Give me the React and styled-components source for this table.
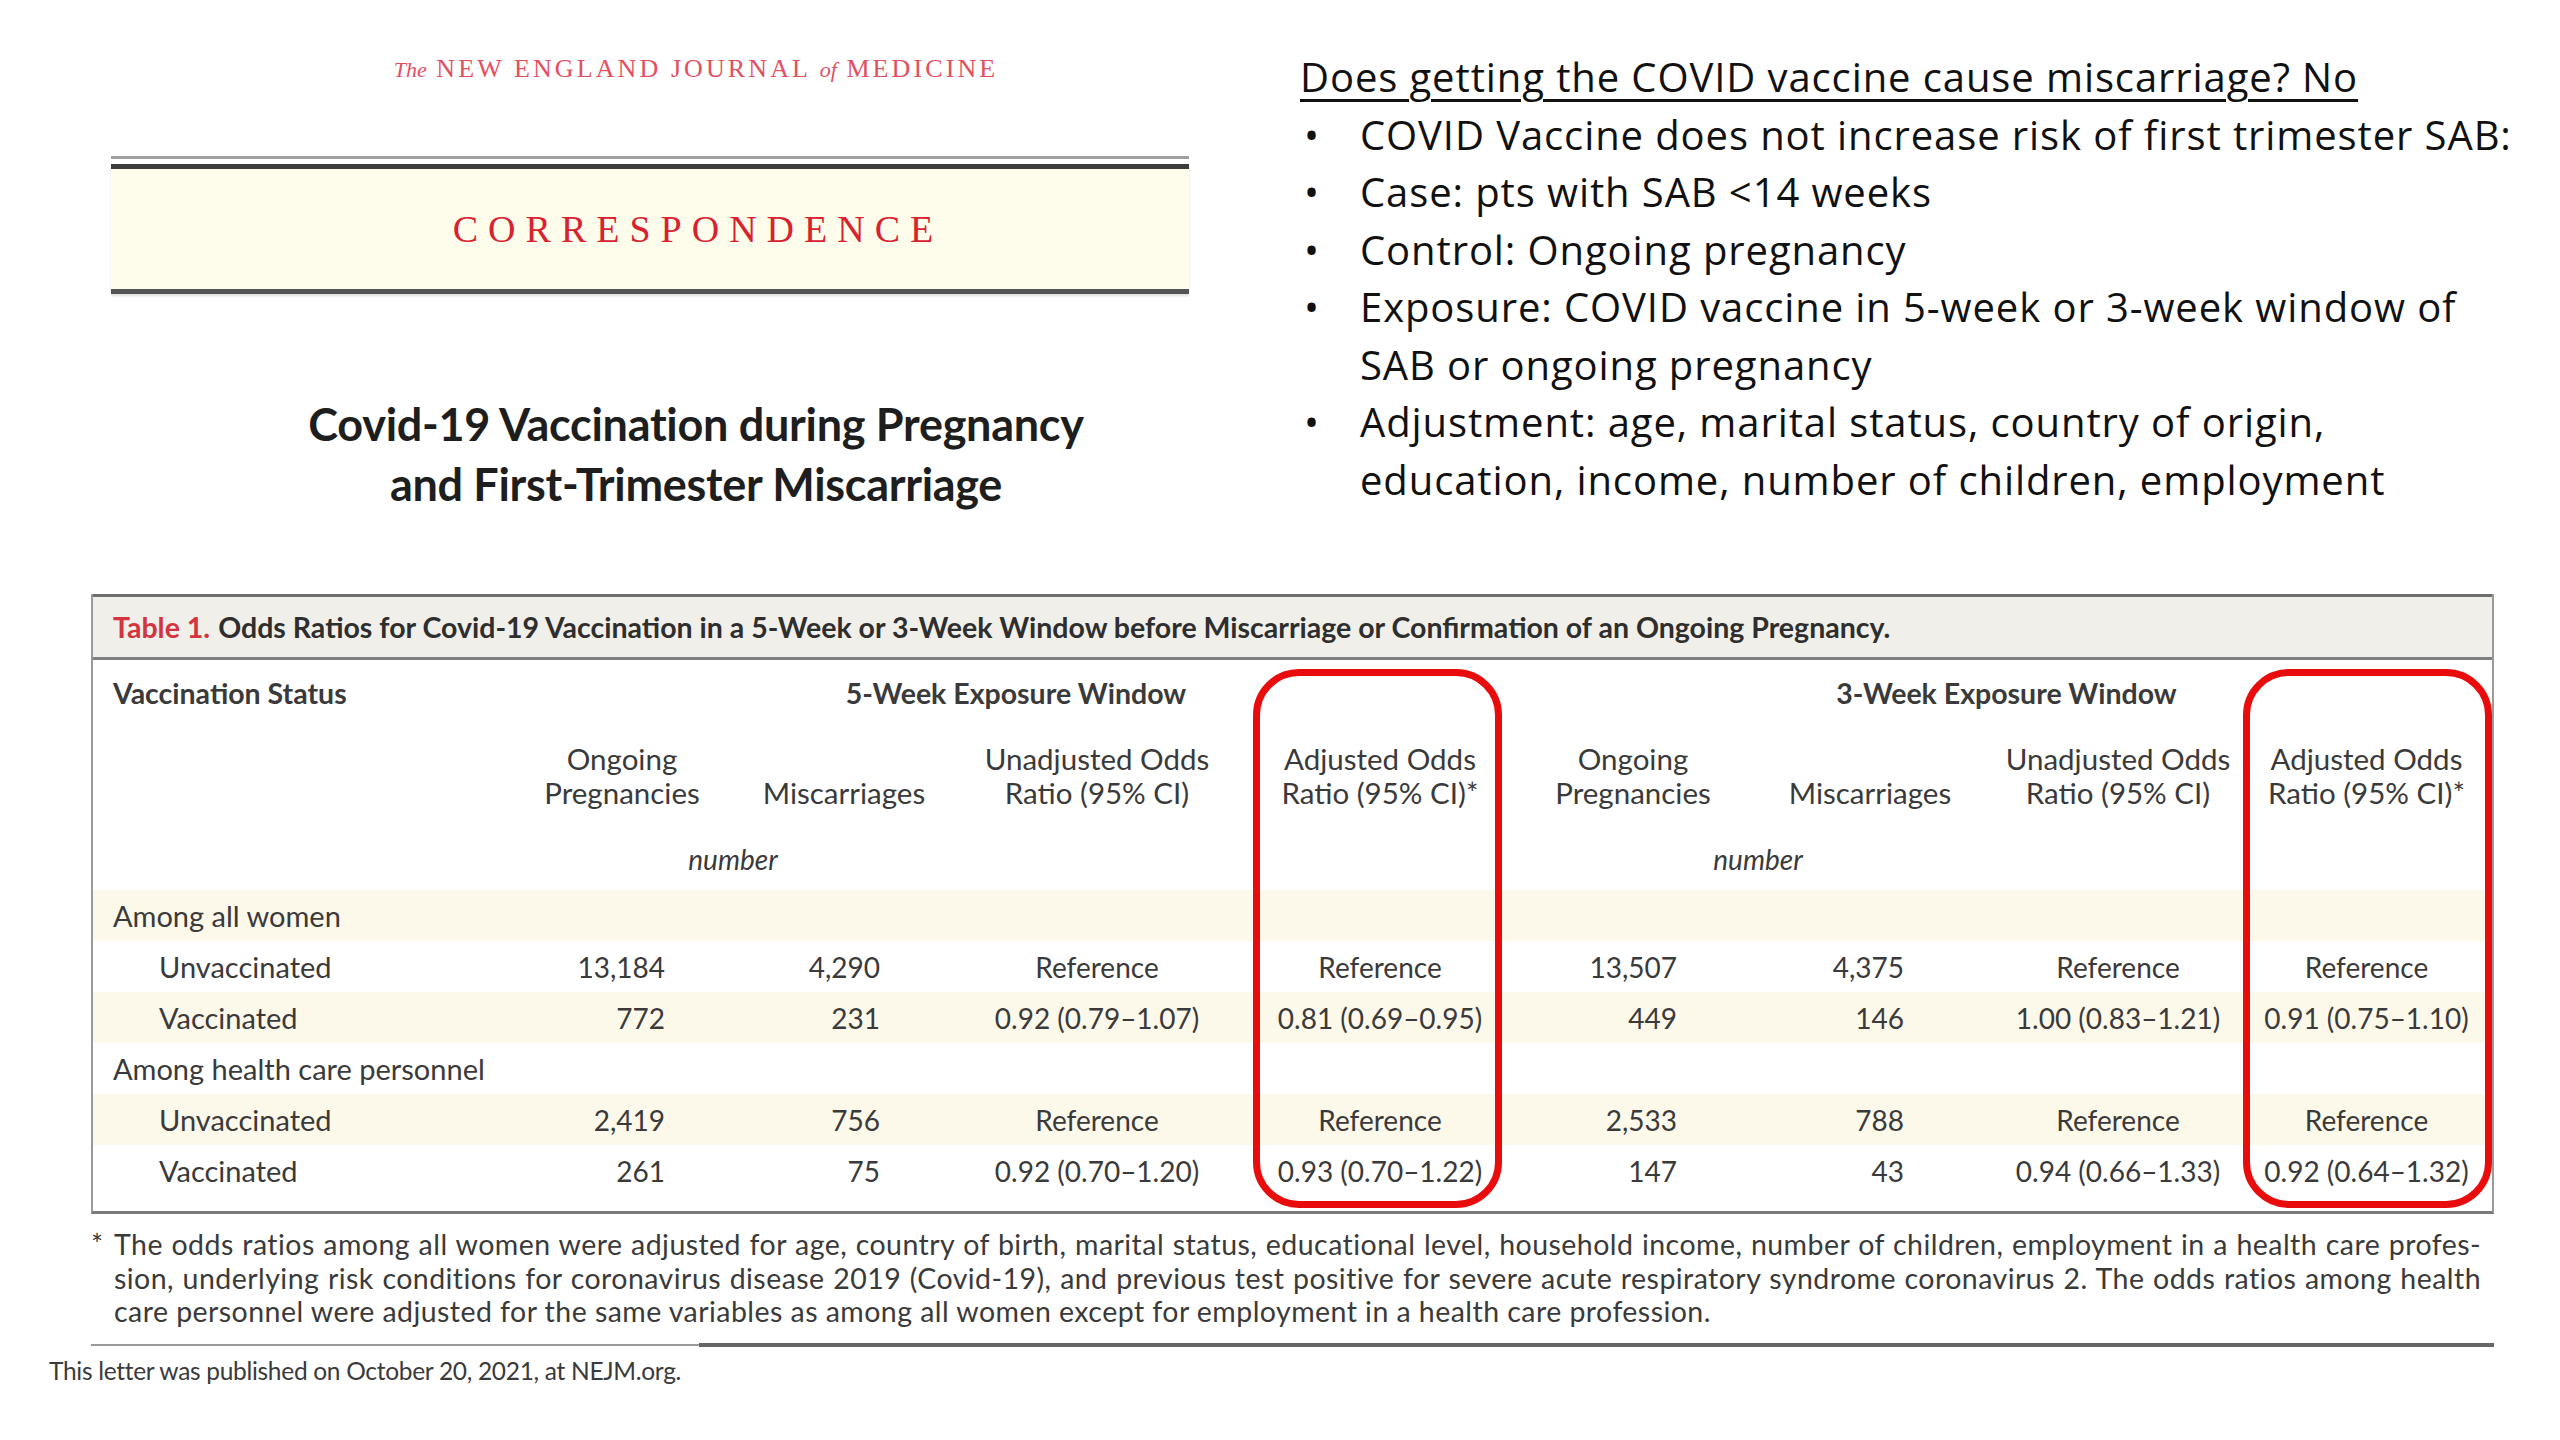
import React from 'react';
import styled, { createGlobalStyle } from 'styled-components';

const GlobalStyle = createGlobalStyle`
  html, body {
    margin: 0;
    padding: 0;
    background: #fff;
  }
`;

const COLS = '418px 222px 222px 284px 282px 224px 250px 246px 251px';

const Page = styled.div`
  width: 2560px;
  height: 1440px;
  overflow: hidden;
  background: #fff;
  font-family: Lato, 'Liberation Sans', sans-serif;
`;

const Top = styled.div`
  display: flex;
  height: 594px;
  padding-left: 111px;
  box-sizing: border-box;
`;

const LeftPanel = styled.div`
  width: 1170px;
  display: flex;
  flex-direction: column;
`;

const Masthead = styled.div`
  margin-top: 55px;
  text-align: center;
  font-family: 'Liberation Serif', serif;
  font-size: 26px;
  line-height: 28px;
  letter-spacing: 3.1px;
  color: #e2505f;

  em {
    font-size: 22px;
    letter-spacing: 0;
  }
`;

const RuleWrap = styled.div`
  width: 1078px;
  margin-top: 72px;
  border-top: 3px solid #a0a0a0;
  padding-top: 5px;
`;

const Band = styled.div`
  height: 120px;
  background: #fefdeb;
  border-top: 5px solid #3d3d3d;
  border-bottom: 5px solid #545454;
  box-shadow: 0 2px 2px rgba(0, 0, 0, 0.12);
  display: flex;
  align-items: center;
  justify-content: center;
  padding-left: 96px;
  font-family: 'Liberation Serif', serif;
  font-size: 38px;
  letter-spacing: 10px;
  color: #d8222f;
`;

const Title = styled.h1`
  margin: 100px 0 0;
  text-align: center;
  font-family: Lato, sans-serif;
  font-weight: 700;
  font-size: 45px;
  line-height: 60px;
  letter-spacing: -0.3px;
  color: #1e1e1e;
`;

const RightPanel = styled.div`
  flex: 1;
  padding: 48px 0 0 19px;
  font-family: 'Open Sans', sans-serif;
  font-size: 40px;
  line-height: 57.5px;
  letter-spacing: 0.9px;
  color: #111;
`;

const Question = styled.div`
  text-decoration: underline;
  text-decoration-thickness: 3px;
  text-underline-offset: 7px;
  white-space: nowrap;
`;

const Bullets = styled.ul`
  list-style: none;
  margin: 0;
  padding: 0;
`;

const Bullet = styled.li`
  display: flex;
  white-space: nowrap;

  &::before {
    content: '•';
    flex: 0 0 60px;
    padding-left: 4px;
    box-sizing: border-box;
  }
`;

const TableBox = styled.div`
  position: relative;
  margin-left: 91px;
  width: 2403px;
  border-left: 2px solid #9a9a9a;
  border-right: 2px solid #9a9a9a;
  border-bottom: 3px solid #7a7a7a;
  box-sizing: border-box;
  color: #3a3a3a;
  font-size: 28px;
`;

const Caption = styled.div`
  height: 66px;
  box-sizing: border-box;
  border-top: 3px solid #6e6e6e;
  border-bottom: 3px solid #808080;
  background: #f1efe9;
  display: flex;
  align-items: center;
  padding-left: 20px;
  font-weight: 700;
  font-size: 28.5px;
  white-space: nowrap;
  color: #2e2e2e;

  span {
    color: #d33440;
    margin-right: 8px;
  }
`;

const Grid = styled.div`
  display: grid;
  grid-template-columns: ${COLS};
  align-items: ${(p) => p.$align || 'center'};
  height: ${(p) => p.$height}px;
  background: ${(p) => (p.$shaded ? '#fcf8ea' : 'transparent')};
`;

const HeadCell = styled.div`
  grid-column: ${(p) => p.$span || 'auto'};
  text-align: ${(p) => (p.$left ? 'left' : 'center')};
  padding-left: ${(p) => (p.$left ? '20px' : '0')};
  font-weight: 700;
  font-size: 28.5px;
  line-height: 34px;
`;

const SubHead = styled.div`
  text-align: center;
  font-size: 29.5px;
  line-height: 34px;
  white-space: nowrap;
`;

const Unit = styled.div`
  grid-column: ${(p) => p.$span};
  margin-top: 18px;
  text-align: center;
  font-style: italic;
  line-height: 34px;
`;

const Label = styled.div`
  padding-left: ${(p) => (p.$indent ? '66px' : '20px')};
  font-size: 29px;
  white-space: nowrap;
`;

const Num = styled.div`
  text-align: right;
  padding-right: ${(p) => p.$pad}px;
`;

const Ratio = styled.div`
  text-align: center;
  white-space: nowrap;
`;

const TableBody = styled.div`
  padding-bottom: 15px;
`;

const Highlight = styled.div`
  position: absolute;
  top: 75px;
  left: ${(p) => p.$left}px;
  width: 249px;
  height: 539px;
  box-sizing: border-box;
  border: 7px solid #e80c0c;
  border-radius: 46px;
  pointer-events: none;
`;

const Footnote = styled.div`
  margin: 14px 0 0 91px;
  width: 2390px;
  font-size: 28.5px;
  line-height: 33.5px;
  letter-spacing: 0.45px;
  color: #3a3a3a;
  position: relative;
  padding-left: 23px;
  box-sizing: border-box;
`;

const Star = styled.span`
  position: absolute;
  left: 0;
  top: 0;
`;

const NoteLine = styled.div`
  white-space: nowrap;
  text-align: ${(p) => (p.$justify ? 'justify' : 'left')};
  text-align-last: ${(p) => (p.$justify ? 'justify' : 'left')};
`;

const RuleRow = styled.div`
  display: flex;
  align-items: center;
  margin: 14px 0 0 91px;
  width: 2403px;
`;

const Rule = styled.div`
  width: ${(p) => (p.$w ? `${p.$w}px` : 'auto')};
  flex: ${(p) => (p.$w ? 'none' : '1')};
  height: ${(p) => p.$h}px;
  background: ${(p) => p.$color};
`;

const Published = styled.div`
  margin: 10px 0 0 49px;
  font-size: 24.5px;
  line-height: 28px;
  letter-spacing: -0.3px;
  color: #3a3a3a;
`;

const rows = [
  { group: 'Among all women' },
  { label: 'Unvaccinated', a: ['13,184', '4,290', 'Reference', 'Reference'], b: ['13,507', '4,375', 'Reference', 'Reference'] },
  { label: 'Vaccinated', a: ['772', '231', '0.92 (0.79–1.07)', '0.81 (0.69–0.95)'], b: ['449', '146', '1.00 (0.83–1.21)', '0.91 (0.75–1.10)'] },
  { group: 'Among health care personnel' },
  { label: 'Unvaccinated', a: ['2,419', '756', 'Reference', 'Reference'], b: ['2,533', '788', 'Reference', 'Reference'] },
  { label: 'Vaccinated', a: ['261', '75', '0.92 (0.70–1.20)', '0.93 (0.70–1.22)'], b: ['147', '43', '0.94 (0.66–1.33)', '0.92 (0.64–1.32)'] },
];

const subHeads = [
  ['Ongoing', 'Pregnancies'],
  ['Miscarriages'],
  ['Unadjusted Odds', 'Ratio (95% CI)'],
  ['Adjusted Odds', 'Ratio (95% CI)*'],
  ['Ongoing', 'Pregnancies'],
  ['Miscarriages'],
  ['Unadjusted Odds', 'Ratio (95% CI)'],
  ['Adjusted Odds', 'Ratio (95% CI)*'],
];

function App() {
  return (
    <Page>
      <GlobalStyle />
      <Top>
        <LeftPanel>
          <Masthead>
            <em>The</em> NEW ENGLAND JOURNAL <em>of</em> MEDICINE
          </Masthead>
          <RuleWrap>
            <Band>CORRESPONDENCE</Band>
          </RuleWrap>
          <Title>
            Covid-19 Vaccination during Pregnancy
            <br />
            and First-Trimester Miscarriage
          </Title>
        </LeftPanel>
        <RightPanel>
          <Question>Does getting the COVID vaccine cause miscarriage? No</Question>
          <Bullets>
            <Bullet>COVID Vaccine does not increase risk of first trimester SAB:</Bullet>
            <Bullet>Case: pts with SAB &lt;14 weeks</Bullet>
            <Bullet>Control: Ongoing pregnancy</Bullet>
            <Bullet>
              <span>
                Exposure: COVID vaccine in 5-week or 3-week window of
                <br />
                SAB or ongoing pregnancy
              </span>
            </Bullet>
            <Bullet>
              <span>
                Adjustment: age, marital status, country of origin,
                <br />
                education, income, number of children, employment
              </span>
            </Bullet>
          </Bullets>
        </RightPanel>
      </Top>

      <TableBox>
        <Caption>
          <span>Table 1.</span>
          Odds Ratios for Covid-19 Vaccination in a 5-Week or 3-Week Window before Miscarriage or Confirmation of an Ongoing Pregnancy.
        </Caption>
        <Grid $height={50} $align="end">
          <HeadCell $left>Vaccination Status</HeadCell>
          <HeadCell $span="2 / 6">5-Week Exposure Window</HeadCell>
          <HeadCell $span="6 / 10">3-Week Exposure Window</HeadCell>
        </Grid>
        <Grid $height={100} $align="end">
          <div />
          {subHeads.map((lines, i) => (
            <SubHead key={i}>
              {lines.map((l) => (
                <div key={l}>{l}</div>
              ))}
            </SubHead>
          ))}
        </Grid>
        <Grid $height={80} $align="center">
          <Unit $span="2 / 4">number</Unit>
          <Unit $span="6 / 8">number</Unit>
        </Grid>
        <TableBody>
          {rows.map((r, i) =>
            r.group ? (
              <Grid key={i} $height={51} $shaded={i % 2 === 0}>
                <Label>{r.group}</Label>
              </Grid>
            ) : (
              <Grid key={i} $height={51} $shaded={i % 2 === 0}>
                <Label $indent>{r.label}</Label>
                <Num $pad={68}>{r.a[0]}</Num>
                <Num $pad={75}>{r.a[1]}</Num>
                <Ratio>{r.a[2]}</Ratio>
                <Ratio>{r.a[3]}</Ratio>
                <Num $pad={68}>{r.b[0]}</Num>
                <Num $pad={91}>{r.b[1]}</Num>
                <Ratio>{r.b[2]}</Ratio>
                <Ratio>{r.b[3]}</Ratio>
              </Grid>
            )
          )}
        </TableBody>
        <Highlight $left={1160} />
        <Highlight $left={2150} />
      </TableBox>

      <Footnote>
        <Star>*</Star>
        <NoteLine $justify>
          The odds ratios among all women were adjusted for age, country of birth, marital status, educational level, household income, number of children, employment in a health care profes-
        </NoteLine>
        <NoteLine $justify>
          sion, underlying risk conditions for coronavirus disease 2019 (Covid-19), and previous test positive for severe acute respiratory syndrome coronavirus 2. The odds ratios among health
        </NoteLine>
        <NoteLine>
          care personnel were adjusted for the same variables as among all women except for employment in a health care profession.
        </NoteLine>
      </Footnote>

      <RuleRow>
        <Rule $w={608} $h={2} $color="#999" />
        <Rule $h={4} $color="#666" />
      </RuleRow>
      <Published>This letter was published on October 20, 2021, at NEJM.org.</Published>
    </Page>
  );
}

export default App;
